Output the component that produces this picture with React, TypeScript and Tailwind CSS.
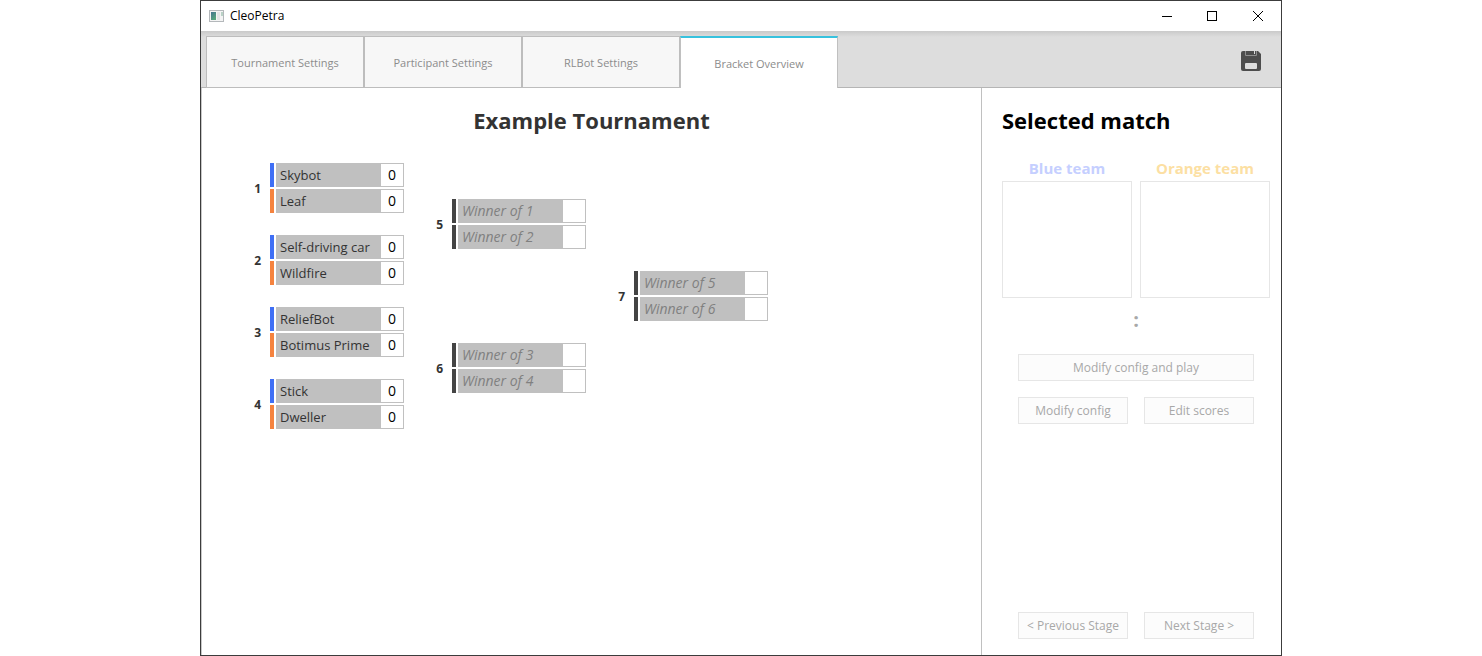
import { useState } from "react";

type Team = { name: string; score?: string; pending?: boolean };
type Match = { id: number; blue: Team; orange: Team };

const team = (name: string): Team => ({ name, score: "0" });
const winnerOf = (id: number): Team => ({ name: `Winner of ${id}`, pending: true });

const rounds: Match[][] = [
  [
    { id: 1, blue: team("Skybot"), orange: team("Leaf") },
    { id: 2, blue: team("Self-driving car"), orange: team("Wildfire") },
    { id: 3, blue: team("ReliefBot"), orange: team("Botimus Prime") },
    { id: 4, blue: team("Stick"), orange: team("Dweller") },
  ],
  [
    { id: 5, blue: winnerOf(1), orange: winnerOf(2) },
    { id: 6, blue: winnerOf(3), orange: winnerOf(4) },
  ],
  [{ id: 7, blue: winnerOf(5), orange: winnerOf(6) }],
];

const tabs = ["Tournament Settings", "Participant Settings", "RLBot Settings", "Bracket Overview"];

function TitleBar() {
  return (
    <header className="flex h-[30px] items-center justify-between pl-2">
      <div className="flex items-center gap-1.5">
        <svg width="15" height="12" viewBox="0 0 15 12" aria-hidden="true">
          <defs>
            <linearGradient id="screen" x1="0" y1="0" x2="0.6" y2="1">
              <stop offset="0" stopColor="#43738f" />
              <stop offset="1" stopColor="#57a67c" />
            </linearGradient>
          </defs>
          <rect x="0.5" y="0.5" width="14" height="11" fill="#f4f4f4" stroke="#b4b8bb" />
          <rect x="2" y="2" width="5" height="8" fill="url(#screen)" />
          <rect x="8" y="2" width="3" height="8" fill="#e2e4e5" />
          <rect x="12" y="2" width="2" height="4" fill="#b9d2c6" />
        </svg>
        <h1 className="text-[12px] leading-4 text-black">CleoPetra</h1>
      </div>
      <div className="flex h-full">
        <button type="button" aria-label="Minimize" className="flex w-[46px] items-center justify-center">
          <svg width="12" height="10" shapeRendering="crispEdges">
            <path d="M2 5.5H12" stroke="#000" />
          </svg>
        </button>
        <button type="button" aria-label="Maximize" className="flex w-[46px] items-center justify-center">
          <svg width="10" height="10" shapeRendering="crispEdges">
            <rect x="0.5" y="0.5" width="9" height="9" fill="none" stroke="#000" />
          </svg>
        </button>
        <button type="button" aria-label="Close" className="flex w-[46px] items-center justify-center">
          <svg width="10" height="10">
            <path d="M0 0L10 10M10 0L0 10" stroke="#000" />
          </svg>
        </button>
      </div>
    </header>
  );
}

function TeamRow({ entry, bar }: { entry: Team; bar: string }) {
  return (
    <li className="flex h-6 gap-0.5">
      <span className={`w-1 ${bar}`} />
      <span className="flex w-32 border border-[#c0c0c0]">
        <span
          className={`flex-1 whitespace-nowrap bg-[#c0c0c0] pl-[3px] leading-[22px] ${
            entry.pending ? "text-[14px] italic text-[#808080]" : "text-[13px] text-[#333333]"
          }`}
        >
          {entry.name}
        </span>
        <span className="w-[22px] text-center text-[14px] leading-[22px] text-black">{entry.score}</span>
      </span>
    </li>
  );
}

function MatchCard({ match }: { match: Match }) {
  const pending = match.blue.pending;
  return (
    <div className="flex min-h-[72px] flex-1 items-center justify-end gap-2">
      <span className="pr-px pt-0.5 text-[12px] font-bold leading-4 text-[#333333]">{match.id}</span>
      <ul className="flex flex-col gap-0.5">
        <TeamRow entry={match.blue} bar={pending ? "bg-[#444444]" : "bg-[#3f6ff5]"} />
        <TeamRow entry={match.orange} bar={pending ? "bg-[#444444]" : "bg-[#f5833f]"} />
      </ul>
    </div>
  );
}

function PanelButton({ children }: { children: string }) {
  return (
    <button
      type="button"
      disabled
      className="h-[27px] flex-1 whitespace-nowrap border border-[#e6e6e6] bg-[#fcfcfc] text-[12px] leading-4 text-[#a8a8a8]"
    >
      {children}
    </button>
  );
}

function TeamBox({ label, color }: { label: string; color: string }) {
  return (
    <section className="flex-1">
      <h3 className={`mb-0.5 text-center text-[15px] font-bold leading-[22px] ${color}`}>{label}</h3>
      <ul aria-label={label} className="h-[117px] border border-[#e6e6e6]" />
    </section>
  );
}

export default function App() {
  const [selected, setSelected] = useState(tabs[3]);
  return (
    <div className="flex min-h-screen justify-center bg-white font-['Open_Sans',sans-serif]">
      <div className="flex w-full max-w-[1082px] flex-col border border-[#3c3c3c] bg-white">
        <TitleBar />
        <nav className="flex items-end justify-between border-b border-[#b5b5b5] bg-[linear-gradient(#cacaca,#dddddd_6px)] pl-[5px] pr-5 pt-[5px]">
          <div role="tablist" className="-mb-px flex">
            {tabs.map((tab) => (
              <button
                key={tab}
                type="button"
                role="tab"
                aria-selected={tab === selected}
                onClick={() => setSelected(tab)}
                className={`h-[52px] w-[158px] border text-[11px] leading-4 text-[#8c8c8c] ${
                  tab === selected
                    ? "border-x-[#c0c0c0] border-b-0 border-t-2 border-t-[#37c2de] bg-white pt-0.5"
                    : "border-[#bdbdbd] bg-[#f7f7f7] pt-0.5"
                }`}
              >
                {tab}
              </button>
            ))}
          </div>
          <button type="button" aria-label="Save" className="mb-4">
            <svg width="20" height="20" viewBox="0 0 20 20">
              <path d="M2 0H17L20 3V18Q20 20 18 20H2Q0 20 0 18V2Q0 0 2 0Z" fill="#4d4d4d" />
              <path d="M4.5 0V4.5H15.5V0" fill="none" stroke="#8f8f8f" />
              <rect x="13" y="0" width="1" height="3" fill="#dddddd" />
              <rect x="4" y="12" width="12" height="6" rx="1" fill="#dddddd" />
            </svg>
          </button>
        </nav>
        <div className="flex flex-1 border-l border-[#c8c8c8]">
          <main className="flex-1 pt-[15px]">
            <h2 className="text-center text-[22px] font-bold leading-[34px] text-[#333333]">Example Tournament</h2>
            <div className="mt-[15px] flex pl-5">
              {rounds.map((matches) => (
                <div key={matches[0].id} className="flex w-[182px] flex-col">
                  {matches.map((match) => (
                    <MatchCard key={match.id} match={match} />
                  ))}
                </div>
              ))}
            </div>
          </main>
          <aside className="flex w-[300px] flex-col border-l border-[#c0c0c0] pb-4 pl-5 pr-[11px] pt-[15px]">
            <h2 className="text-[22px] font-bold leading-[34px] text-black">Selected match</h2>
            <div className="mt-5 flex gap-2">
              <TeamBox label="Blue team" color="text-[#c5cfff]" />
              <TeamBox label="Orange team" color="text-[#fcdfa3]" />
            </div>
            <p className="mb-6 mt-3 text-center text-[20px] font-bold leading-5 text-[#a8a8a8]">:</p>
            <div className="flex flex-1 flex-col gap-4 px-4">
              <div className="flex">
                <PanelButton>Modify config and play</PanelButton>
              </div>
              <div className="grid grid-cols-2 gap-4">
                <PanelButton>Modify config</PanelButton>
                <PanelButton>Edit scores</PanelButton>
              </div>
              <div className="mt-auto grid grid-cols-2 gap-4">
                <PanelButton>{"< Previous Stage"}</PanelButton>
                <PanelButton>{"Next Stage >"}</PanelButton>
              </div>
            </div>
          </aside>
        </div>
      </div>
    </div>
  );
}
